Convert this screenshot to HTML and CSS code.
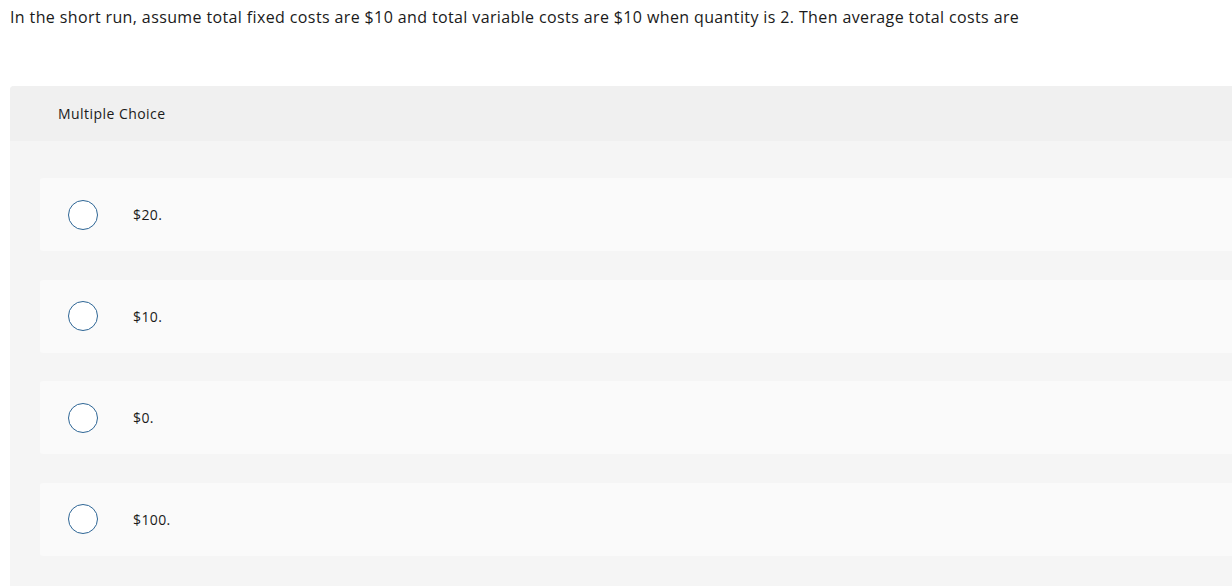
FILE: index.html
```html
<!DOCTYPE html>
<html>
<head>
<meta charset="utf-8">
<link rel="stylesheet" href="styles.css">
</head>
<body>
<div class="page">
  <p class="question">In the short run, assume total fixed costs are $10 and total variable costs are $10 when quantity is 2. Then average total costs are</p>
  <div class="panel">
    <div class="panel-head">Multiple Choice</div>
    <div class="panel-body">
      <div class="option"><span class="radio"></span><span class="label">$20.</span></div>
      <div class="option"><span class="radio"></span><span class="label">$10.</span></div>
      <div class="option"><span class="radio"></span><span class="label">$0.</span></div>
      <div class="option"><span class="radio"></span><span class="label">$100.</span></div>
    </div>
  </div>
</div>
</body>
</html>
```
FILE: styles.css
```css
html, body {
  margin: 0;
  padding: 0;
  background: #ffffff;
  overflow: hidden;
}
body {
  font-family: "Open Sans", "Liberation Sans", sans-serif;
  color: #1a1a1a;
}
.page {
  width: 1260px;
}
.question {
  margin: 0;
  padding: 6px 10px 0 10px;
  font-size: 16px;
  line-height: 22px;
  letter-spacing: 0.38px;
  color: #1a1a1a;
  height: 80px;
}
.panel {
  margin-left: 10px;
  border-radius: 4px 0 0 0;
  overflow: hidden;
  background: #f5f5f5;
}
.panel-head {
  background: #f0f0f0;
  height: 55px;
  padding-left: 48px;
  font-size: 14px;
  line-height: 55px;
  letter-spacing: 0.45px;
  color: #1a1a1a;
}
.panel-body {
  padding: 37px 0 30px 30px;
  display: flex;
  flex-direction: column;
  gap: 28.5px;
}
.option {
  background: #fafafa;
  border-radius: 3px 0 0 3px;
  height: 73px;
  display: flex;
  align-items: center;
}
.radio {
  width: 28px;
  height: 28px;
  border: 1.5px solid #2d6595;
  border-radius: 50%;
  background: #fff;
  margin-left: 28px;
  flex: none;
}
.label {
  margin-left: 35px;
  font-size: 14px;
  letter-spacing: 0.4px;
  color: #1a1a1a;
}
```
